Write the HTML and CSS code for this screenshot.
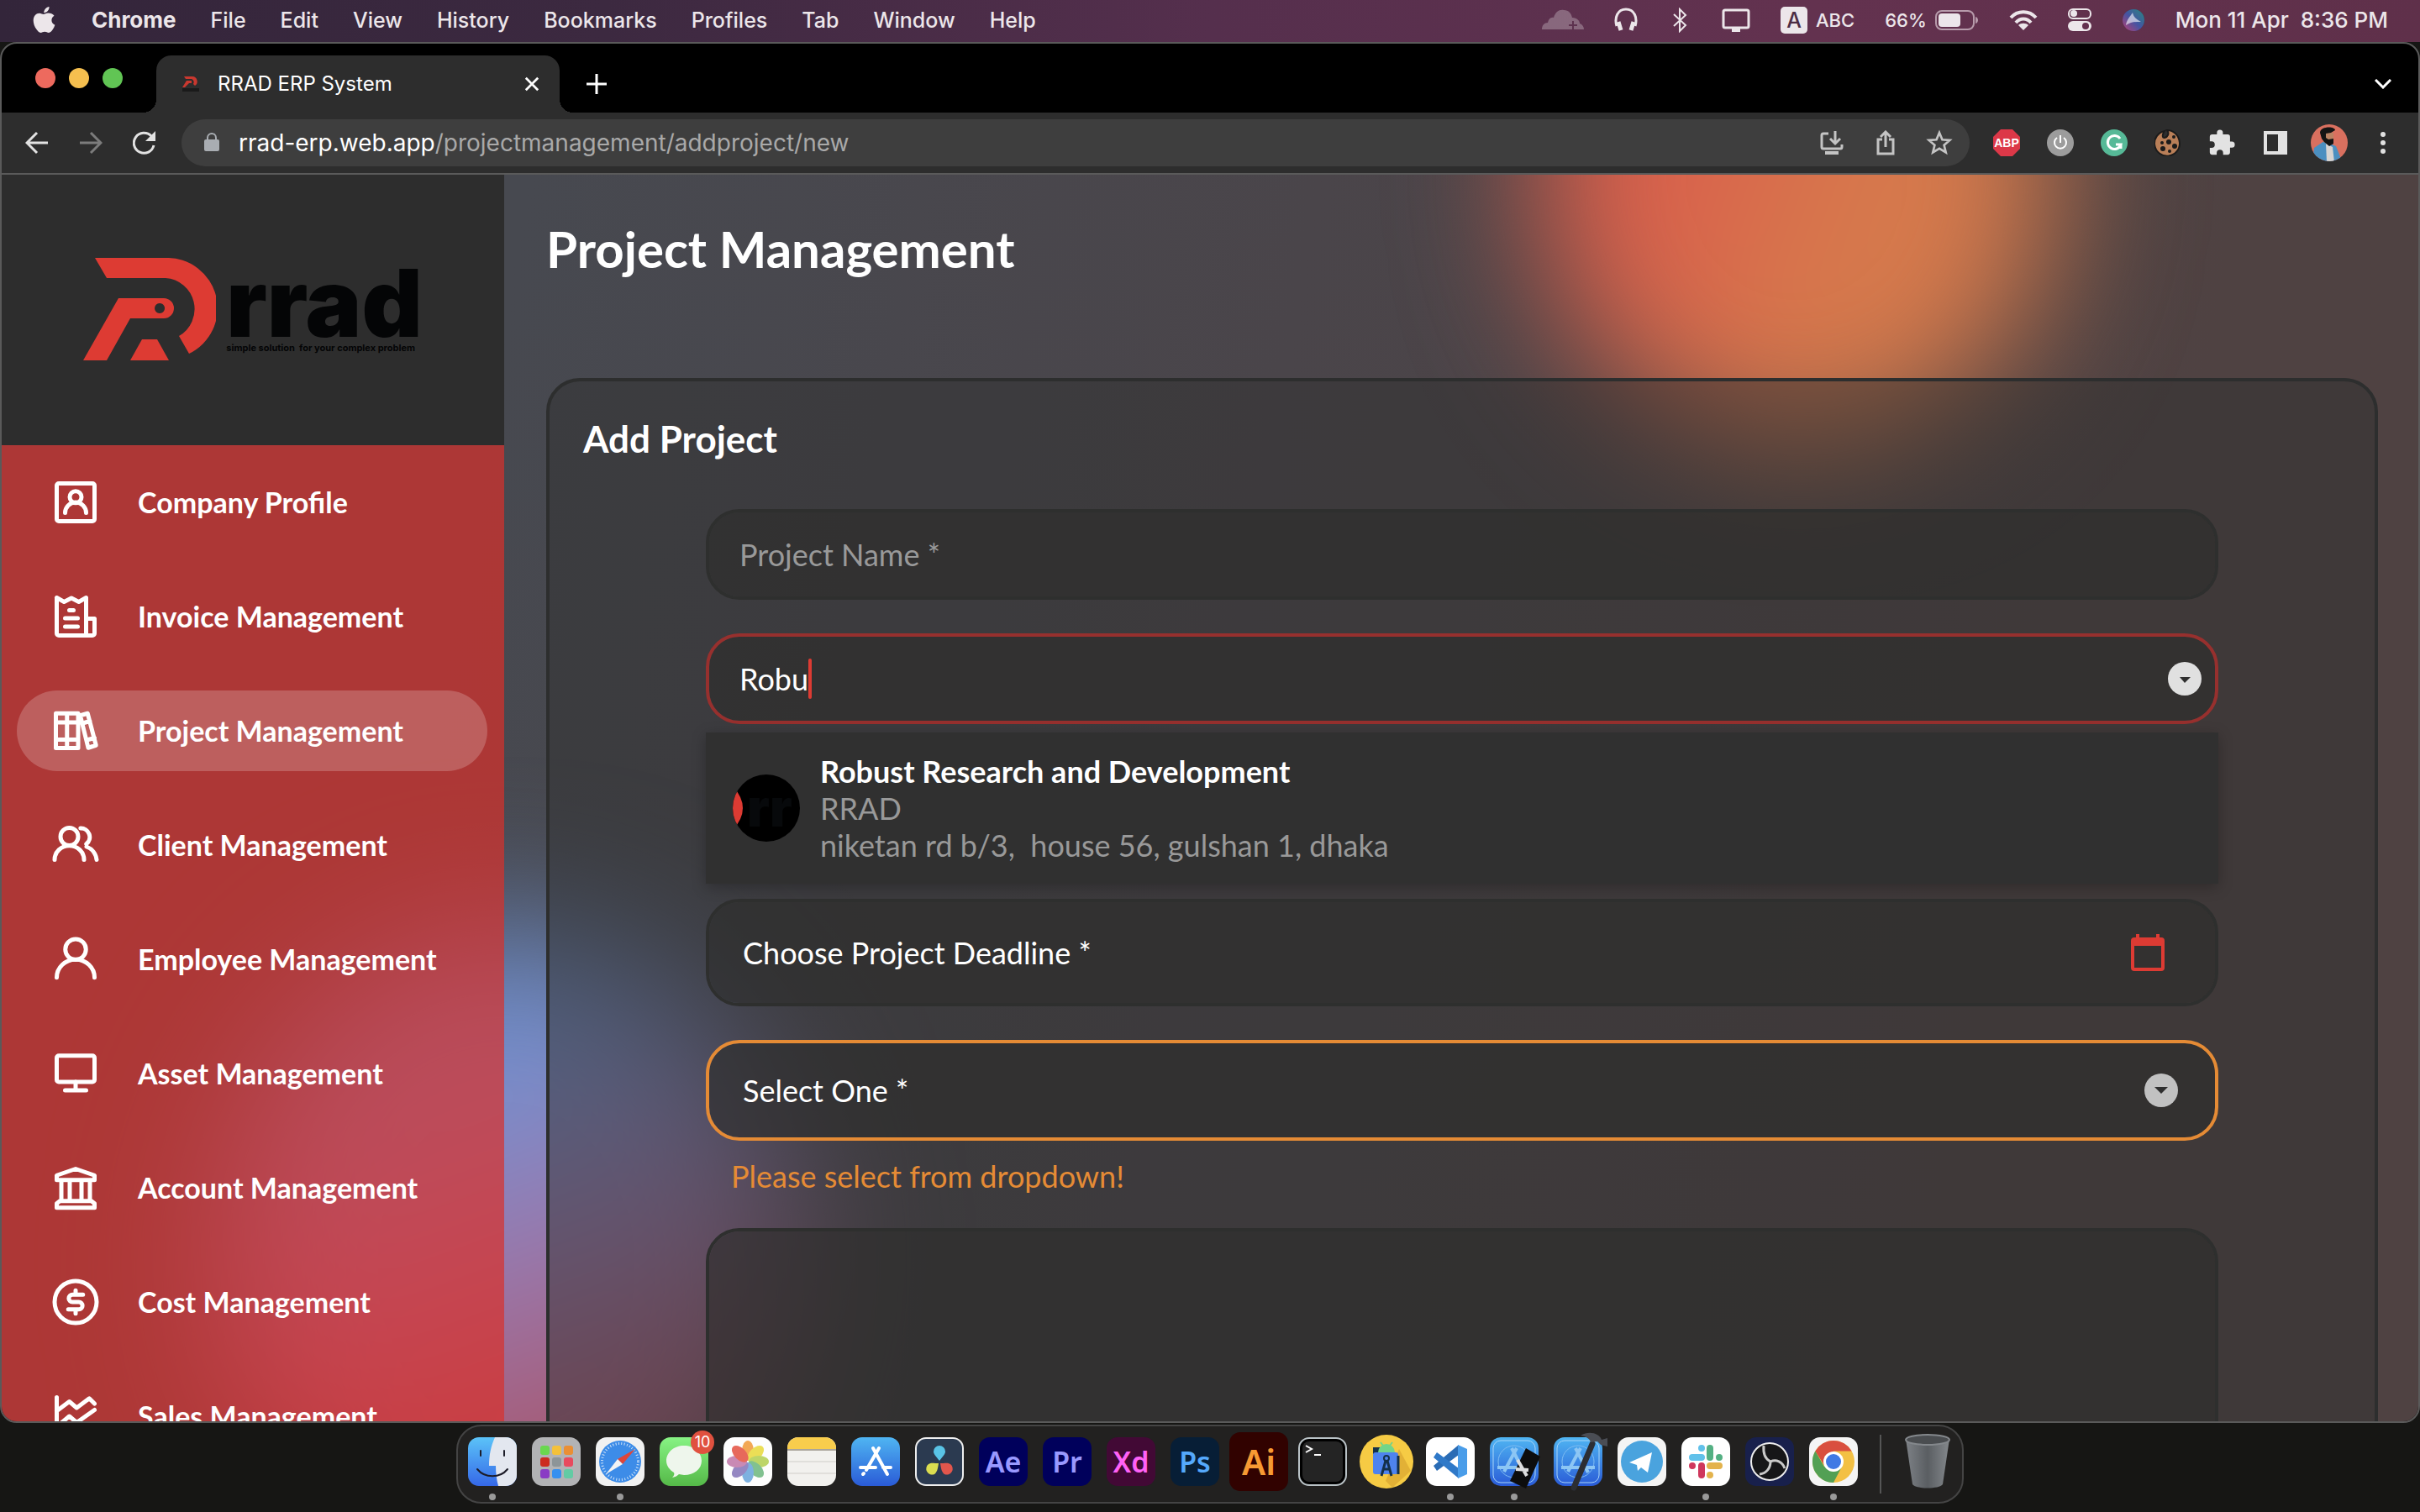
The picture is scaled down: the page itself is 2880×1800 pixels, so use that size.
FILE: index.html
```html
<!DOCTYPE html>
<html lang="en">
<head>
<meta charset="utf-8">
<title>RRAD ERP System</title>
<link rel="stylesheet" href="styles.css">
</head>
<body>
<header class="menubar">
  <nav class="menus" aria-label="Menu bar">
    <button class="menu" aria-label="Apple"><svg width="30" height="34" viewBox="0 0 30 34" fill="currentColor"><path d="M20.5 1c.2 2-.6 3.8-1.700 5.100-1.200 1.400-2.900 2.300-4.500 2.200-.2-1.900.7-3.800 1.700-4.900C17.200 2 19.100 1.100 20.500 1zM26.500 11.800c-1.900 1.200-3.100 3-3.100 5.300 0 2.700 1.600 4.800 4 5.700-.6 1.900-1.600 3.900-2.900 5.700-1.200 1.700-2.500 3.400-4.500 3.400s-2.500-1.200-4.800-1.200c-2.200 0-3 1.200-4.800 1.200-2 0-3.400-1.800-4.700-3.600C3.100 24.900 1.700 20.700 1.700 17.400c0-5.500 3.500-8.700 7.200-8.700 2 0 3.600 1.300 4.900 1.300 1.200 0 3.100-1.400 5.500-1.400 2.900 0 5.500 1.200 7.200 3.200z"/></svg></button>
    <button class="menu menu-app">Chrome</button>
    <button class="menu">File</button>
    <button class="menu">Edit</button>
    <button class="menu">View</button>
    <button class="menu">History</button>
    <button class="menu">Bookmarks</button>
    <button class="menu">Profiles</button>
    <button class="menu">Tab</button>
    <button class="menu">Window</button>
    <button class="menu">Help</button>
  </nav>
  <div class="status">
    <svg class="dim" width="50" height="26" viewBox="0 0 50 26" fill="currentColor"><path d="M0 24c0-5 3-8 7-8 1-5 4-7 7-6C16 3 21 0 26 1c6 0 9 4 10 9 6 0 9 4 9 7 3 1 5 4 5 7H0z"/><path d="M37 14v10M32 19h10" stroke="#5d3550" stroke-width="2"/></svg>
    <svg width="28" height="30" viewBox="0 0 28 30" fill="none" stroke="currentColor" stroke-width="3"><path d="M3 22c-3-10 1-20 11-20s14 10 11 20"/><path d="M5 17l3 10M23 17l-3 10" stroke-width="5"/></svg>
    <svg width="28" height="30" viewBox="0 0 28 30" fill="none" stroke="currentColor" stroke-width="2"><path d="M7 8l14 13-7 7V2l7 7L7 22"/></svg>
    <svg width="34" height="30" viewBox="0 0 34 30" fill="none" stroke="currentColor" stroke-width="3"><rect x="2" y="3" width="30" height="21" rx="2"/><path d="M12 27h10" stroke-width="4"/></svg>
    <span class="input-source"><span class="key">A</span>ABC</span>
    <span class="battery">66%<svg width="52" height="26" viewBox="0 0 52 26"><rect x="1" y="2" width="45" height="22" rx="7" fill="none" stroke="#b79bab" stroke-width="2"/><rect x="4" y="5" width="26" height="16" rx="4" fill="currentColor"/><path d="M48 9c4 1 4 7 0 8z" fill="#b79bab"/></svg></span>
    <svg width="34" height="26" viewBox="0 0 34 26" fill="none" stroke="currentColor" stroke-width="4"><path d="M2 10C10 1 24 1 32 10M8 16c5-6 13-6 18 0"/><path d="M17 25l-6-6c3-3 9-3 12 0z" fill="currentColor" stroke="none"/></svg>
    <svg width="28" height="28" viewBox="0 0 28 28"><rect x="1" y="1" width="26" height="11" rx="5" fill="none" stroke="currentColor" stroke-width="2"/><circle cx="7" cy="6" r="4" fill="currentColor"/><rect x="0" y="15" width="28" height="12" rx="6" fill="currentColor"/><circle cx="21" cy="21" r="4" fill="#63304e"/></svg>
    <svg width="28" height="28" viewBox="0 0 28 28"><defs><linearGradient id="siri" x1="0" y1="1" x2="1" y2="0"><stop offset="0" stop-color="#e0457c"/><stop offset=".5" stop-color="#4a5fb8"/><stop offset="1" stop-color="#28a08c"/></linearGradient></defs><circle cx="14" cy="14" r="13" fill="#2a2b4f"/><circle cx="14" cy="14" r="13" fill="url(#siri)" opacity=".8"/><path d="M5 20c1-7 5-10 8-15 1 5 4 8 10 11-7 0-12 0-18 4z" fill="#fff" opacity=".6"/></svg>
    <time class="clock">Mon 11 Apr&nbsp; 8:36 PM</time>
  </div>
</header>

<div class="window">
  <div class="tabstrip">
    <div class="lights"><button class="light red" aria-label="Close"></button><button class="light yellow" aria-label="Minimize"></button><button class="light green" aria-label="Zoom"></button></div>
    <div class="tab">
      <svg width="20" height="20" viewBox="0 0 20 20"><path d="M2 1h10a6 6 0 0 1 3 11l-2-2a4 4 0 0 0-2-6H4zM5 6h6v3H8l-5 5H0z" fill="#c9382f"/><path d="M0 15h20v4H0z" fill="#1a1a1a"/></svg>
      <span class="tab-title">RRAD ERP System</span>
      <button class="plain" aria-label="Close tab"><svg width="18" height="18" viewBox="0 0 20 20" stroke="#fff" stroke-width="3"><path d="M2 2l16 16M18 2L2 18"/></svg></button>
    </div>
    <button class="plain new-tab" aria-label="New tab"><svg width="24" height="24" viewBox="0 0 24 24" stroke="#fff" stroke-width="3"><path d="M12 0v24M0 12h24"/></svg></button>
    <button class="plain tab-search" aria-label="Search tabs"><svg width="20" height="12" viewBox="0 0 20 12" fill="none" stroke="#fff" stroke-width="3"><path d="M1 1l9 9 9-9"/></svg></button>
  </div>

  <div class="toolbar">
    <button class="tool" aria-label="Back"><svg width="28" height="28" viewBox="0 0 28 28" fill="none" stroke="#e2e2e2" stroke-width="3"><path d="M27 14H3M14 2L2 14l12 12"/></svg></button>
    <button class="tool" aria-label="Forward"><svg width="28" height="28" viewBox="0 0 28 28" fill="none" stroke="#7c7c7c" stroke-width="3"><path d="M1 14h24M14 2l12 12-12 12"/></svg></button>
    <button class="tool" aria-label="Reload"><svg width="28" height="28" viewBox="0 0 28 28"><path d="M25 17A12 12 0 1 1 22 6" fill="none" stroke="#e2e2e2" stroke-width="3"/><path d="M27 0v12H15z" fill="#e2e2e2"/></svg></button>
    <div class="omnibox">
      <svg class="lock" width="18" height="24" viewBox="0 0 18 24"><rect x="0" y="8" width="18" height="14" rx="2" fill="#a9adb2"/><path d="M4 9V6a5 5 0 0 1 10 0v3" fill="none" stroke="#a9adb2" stroke-width="2"/></svg>
      <div class="url" role="textbox" aria-label="Address"><span class="host">rrad-erp.web.app</span>/projectmanagement/addproject/new</div>
      <button class="tool" aria-label="Install app"><svg width="30" height="28" viewBox="0 0 30 28" fill="none" stroke="#c4c4c4" stroke-width="3"><path d="M11 3H5a2 2 0 0 0-2 2v14a2 2 0 0 0 2 2h20a2 2 0 0 0 2-2v-3M19 0v14M13 9l6 6 6-6"/><path d="M7 26h16" stroke-width="4"/></svg></button>
      <button class="tool" aria-label="Share"><svg width="24" height="30" viewBox="0 0 24 30" fill="none" stroke="#c4c4c4" stroke-width="3"><path d="M8 11H3v17h18V11h-5M12 20V3M6 8l6-6 6 6"/></svg></button>
      <button class="tool" aria-label="Bookmark"><svg width="32" height="32" viewBox="0 0 24 24" fill="none" stroke="#c4c4c4" stroke-width="2"><path d="M12 3l2.600 6.200 6.700.5-5.100 4.400 1.600 6.500L12 17.100l-5.800 3.500 1.600-6.500-5.100-4.400 6.700-.5z"/></svg></button>
    </div>
    <button class="tool abp" aria-label="Adblock Plus"><svg width="32" height="32" viewBox="0 0 32 32"><path d="M9 0h14l9 9v14l-9 9H9l-9-9V9z" fill="#dc3848"/><text x="16" y="21" text-anchor="middle" font-size="14" font-weight="700" fill="#fff">ABP</text></svg></button>
    <button class="tool" aria-label="Power"><svg width="32" height="32" viewBox="0 0 32 32" fill="none" stroke="#fff" stroke-width="2"><circle cx="16" cy="16" r="16" fill="#9c9c9c" stroke="none"/><path d="M12 10a7 7 0 1 0 8 0M16 7v9"/></svg></button>
    <button class="tool" aria-label="Grammarly"><svg width="32" height="32" viewBox="0 0 32 32" fill="none" stroke="#fff" stroke-width="3"><circle cx="16" cy="16" r="16" fill="#56b997" stroke="none"/><path d="M23 11a8 8 0 1 0 1 7h-6M24 17v6"/></svg></button>
    <button class="tool" aria-label="Cookies"><svg width="32" height="32" viewBox="0 0 32 32"><path d="M12 2a15 15 0 1 0 18 14C29 6 22 1 15 1c3 4 1 8-3 9-3 0-3-4 0-8z" fill="#b97f58" stroke="#1b1b1b" stroke-width="2"/><g fill="#1b1b1b"><circle cx="9" cy="16" r="2"/><circle cx="17" cy="15" r="3"/><circle cx="10" cy="23" r="3"/><circle cx="18" cy="26" r="2"/><circle cx="24" cy="20" r="3"/><circle cx="23" cy="9" r="2"/></g></svg></button>
    <button class="tool" aria-label="Extensions"><svg width="34" height="34" viewBox="0 0 24 24" fill="#e2e2e2"><path d="M20.500 11H19V7a2 2 0 0 0-2-2h-4V3.500a2.500 2.500 0 0 0-5 0V5H4a2 2 0 0 0-2 2v3.800h1.500a2.700 2.700 0 0 1 0 5.400H2V20a2 2 0 0 0 2 2h3.800v-1.500a2.700 2.700 0 0 1 5.400 0V22H17a2 2 0 0 0 2-2v-4h1.500a2.500 2.500 0 0 0 0-5z"/></svg></button>
    <button class="tool" aria-label="Side panel"><svg width="28" height="28" viewBox="0 0 28 28"><path d="M0 0h28v28H0zM4 4v20h13V4z" fill="#e2e2e2" fill-rule="evenodd"/></svg></button>
    <button class="tool" aria-label="Profile"><svg width="44" height="44" viewBox="0 0 44 44"><clipPath id="face"><circle cx="22" cy="22" r="22"/></clipPath><g clip-path="url(#face)"><path d="M0 0h44v44H0z" fill="#d9705f"/><path d="M4 28l12-8 14 6 8 20H2z" fill="#4b8fc0"/><path d="M18 23l8 4 2 18h-9z" fill="#d8d5d2"/><path d="M15 10h12v11l-4 4-8-4z" fill="#b98263"/><path d="M11 10c0-8 18-8 18-3l-5 3-6 1v5l3 2 6-1v6l-5 3-6-5-3-4z" fill="#141414"/></g></svg></button>
    <button class="tool" aria-label="Menu"><svg width="8" height="28" viewBox="0 0 8 28" fill="#e2e2e2"><circle cx="4" cy="4" r="3"/><circle cx="4" cy="14" r="3"/><circle cx="4" cy="24" r="3"/></svg></button>
  </div>

  <div class="page">
    <div class="blob blob-warm"></div>
    <div class="blob blob-cool"></div>
    <aside class="sidebar">
      <div class="brand">
        <svg width="158" height="122" viewBox="0 0 158 122" fill="#dd3b33"><path d="M14 0h84a60 60 0 0 1 28 114l-12-21a37 37 0 0 0-16-69H28z"/><path fill-rule="evenodd" d="M42 48h54a12 12 0 0 1 0 24H56L28 122H0zM91 54a6 6 0 1 0 .1 0z"/><path d="M70 97h18l14 25H56z"/></svg>
        <div class="brand-text"><span class="wordmark">rrad</span><span class="tagline">simple solution&nbsp; for your complex problem</span></div>
      </div>
      <nav class="side-nav" aria-label="Sections">
        <a class="side-link" href="#company"><svg class="side-icon" viewBox="0 0 24 24"><rect x="3" y="3" width="18" height="18" rx="1"/><circle cx="12" cy="9.500" r="2.800"/><path d="M7 17a5 5 0 0 1 10 0"/></svg>Company Profile</a>
        <a class="side-link" href="#invoice"><svg class="side-icon" viewBox="0 0 24 24"><path d="M3 3l3.500 2L10 3.200 13.500 5 17 3v18M17 13h4v7a1 1 0 0 1-1 1H4a1 1 0 0 1-1-1V3M9 9h2M7 12.800h6M7 16.800h6"/></svg>Invoice Management</a>
        <a class="side-link active" href="#project" aria-current="page"><svg class="side-icon" viewBox="0 0 24 24"><path d="M2.600 3.700h10.600v16.500H2.600zM7.900 3.700v16.500M2.600 8h10.600M2.600 16.200h10.600M14.200 4.700l3.500-1 4 15.200-3.700 1.200zM15.300 8.400l3.500-1M17.300 16.400l3.700-1"/></svg>Project Management</a>
        <a class="side-link" href="#client"><svg class="side-icon" viewBox="0 0 24 24"><circle cx="9" cy="8" r="4.200"/><path d="M2 19a7 6.700 0 0 1 14 0M14.300 4a4.200 4.200 0 0 1 2.800 7.500M17.200 12.800a7.500 7.500 0 0 1 4.800 6.200"/></svg>Client Management</a>
        <a class="side-link" href="#employee"><svg class="side-icon" viewBox="0 0 24 24"><circle cx="12" cy="7.300" r="4.900"/><path d="M3 20.700a9 8.600 0 0 1 18 0"/></svg>Employee Management</a>
        <a class="side-link" href="#asset"><svg class="side-icon" viewBox="0 0 24 24"><rect x="3" y="3.500" width="18" height="12.500" rx="1"/><path d="M12 16v4M7 20h10"/></svg>Asset Management</a>
        <a class="side-link" href="#account"><svg class="side-icon" viewBox="0 0 24 24"><path d="M3 8.300V6.100L12 3l9 3.100v2.200zM3 21.500v-2l1.500-1.200h15L21 19.500v2zM5.200 8.300v10M9.200 8.300v10M14.800 8.300v10M18.800 8.300v10"/></svg>Account Management</a>
        <a class="side-link" href="#cost"><svg class="side-icon" viewBox="0 0 24 24"><circle cx="12" cy="12" r="10"/><path d="M15.500 8.500h-5a1.700 1.700 0 0 0 0 3.500h3a1.700 1.700 0 0 1 0 3.500h-5M12 6.500v2M12 15.500v2"/></svg>Cost Management</a>
        <a class="side-link" href="#sales"><svg class="side-icon" viewBox="0 0 24 24"><path d="M3 3v18h18M3 9.500l6-4.500 3.500 3 6-4.500L21 6M3 17l6-5 3.500 3L21 9"/></svg>Sales Management</a>
      </nav>
    </aside>

    <main class="main">
      <h1 class="page-title">Project Management</h1>
      <section class="card">
        <h2 class="card-title">Add Project</h2>
        <form class="form">
          <input class="field" type="text" placeholder="Project Name *" aria-label="Project Name">
          <div class="combo">
            <div class="field combo-box">
              <input class="combo-input" type="text" value="Robu" aria-label="Client"><span class="caret"></span>
              <button class="plain combo-toggle" type="button" aria-label="Show clients"><svg width="40" height="40" viewBox="0 0 40 40"><circle cx="20" cy="20" r="20" fill="#e0e0e0"/><path d="M14 18h13l-7 7z" fill="#2f2f2f"/></svg></button>
            </div>
            <div class="options" role="listbox">
              <div class="option" role="option" aria-selected="false">
                <svg width="80" height="80" viewBox="0 0 80 80"><clipPath id="logo"><circle cx="40" cy="40" r="40"/></clipPath><g clip-path="url(#logo)"><path d="M0 0h80v80H0z"/><path d="M0 14q24 26 0 52z" fill="#dd3b33"/><text class="mini-word" x="17" y="62">rr</text></g></svg>
                <div class="option-text"><strong class="option-name">Robust Research and Development</strong><span>RRAD</span><span>niketan rd b/3,&nbsp; house 56, gulshan 1, dhaka</span></div>
              </div>
            </div>
          </div>
          <button class="field date-field" type="button">Choose Project Deadline *<svg width="40" height="44" viewBox="0 0 40 44"><path fill-rule="evenodd" fill="#dd3b33" d="M6 0h4v4h20V0h4v4h2a4 4 0 0 1 4 4v32a4 4 0 0 1-4 4H4a4 4 0 0 1-4-4V8a4 4 0 0 1 4-4h2zM4 14v26h32V14z"/></svg></button>
          <div class="select-group">
            <select class="field select-field" aria-label="Project type" aria-describedby="select-error"><option>Select One *</option></select>
            <svg class="select-arrow" width="40" height="40" viewBox="0 0 40 40"><circle cx="20" cy="20" r="20" fill="#c1c1c1"/><path d="M12 16h16l-8 8z" fill="#2f2f2f"/></svg>
            <p class="error" id="select-error">Please select from dropdown!</p>
          </div>
          <textarea class="field notes" aria-label="Description"></textarea>
        </form>
      </section>
    </main>
  </div>
</div>

<footer class="dock-area">
  <div class="dock">
    <button class="app open" aria-label="Finder"><svg viewBox="0 0 58 58"><defs><linearGradient id="fi" x2="0" y2="1"><stop stop-color="#5bc3f8"/><stop offset="1" stop-color="#3568e8"/></linearGradient><clipPath id="sq"><rect width="58" height="58" rx="13"/></clipPath></defs><g clip-path="url(#sq)"><path d="M0 0h58v58H0z" fill="url(#fi)"/><path d="M32 0c-5 11-7 22-7 34h8c0 9 1 17 3 24h22V0z" fill="#e3e7ef"/></g><path d="M15 16v6M43 16v6M11 38c9 11 27 11 36 0" fill="none" stroke="#1c1c28" stroke-width="2" stroke-linecap="round"/></svg></button>
    <button class="app" aria-label="Launchpad"><svg viewBox="0 0 58 58"><rect width="58" height="58" rx="13" fill="#b2b3b5"/><rect x="10" y="10" width="11" height="11" rx="3" fill="#6ad84f"/><rect x="24" y="10" width="11" height="11" rx="3" fill="#f4c13a"/><rect x="38" y="10" width="11" height="11" rx="3" fill="#ea8f34"/><rect x="10" y="24" width="11" height="11" rx="3" fill="#cc2c20"/><rect x="24" y="24" width="11" height="11" rx="3" fill="#8d9598"/><rect x="38" y="24" width="11" height="11" rx="3" fill="#e84a5e"/><rect x="10" y="38" width="11" height="11" rx="3" fill="#8a3cc4"/><rect x="24" y="38" width="11" height="11" rx="3" fill="#3590ef"/><rect x="38" y="38" width="11" height="11" rx="3" fill="#62cba4"/></svg></button>
    <button class="app open" aria-label="Safari"><svg viewBox="0 0 58 58"><rect width="58" height="58" rx="13" fill="#f1f1f1"/><circle cx="29" cy="29" r="25" fill="#3d8ce8"/><circle cx="29" cy="29" r="21.500" fill="none" stroke="#cfe3f8" stroke-width="3" stroke-dasharray="1 2.400"/><path d="M47 14L32 32l-6-6z" fill="#e0453a"/><path d="M12 44l14-18 6 6z" fill="#f4f4f4"/></svg></button>
    <button class="app" aria-label="Messages"><svg viewBox="0 0 58 58"><defs><linearGradient id="me" x2="0" y2="1"><stop stop-color="#87f384"/><stop offset="1" stop-color="#55b948"/></linearGradient></defs><rect width="58" height="58" rx="13" fill="url(#me)"/><path d="M29 10c12 0 21 8 21 18s-9 17-21 17l-6-1c-2 2-4 3-8 4 2-2 3-4 2-6-5-3-9-8-9-14 0-10 9-18 21-18z" fill="#eef6ec"/></svg><span class="badge">10</span></button>
    <button class="app" aria-label="Photos"><svg viewBox="0 0 58 58"><rect width="58" height="58" rx="13" fill="#fdfdfd"/><g opacity=".85"><ellipse cx="29" cy="16" rx="7" ry="12" fill="#f19a38"/><ellipse cx="29" cy="16" rx="7" ry="12" fill="#e8d93a" transform="rotate(45 29 29)"/><ellipse cx="29" cy="16" rx="7" ry="12" fill="#b3cf4f" transform="rotate(90 29 29)"/><ellipse cx="29" cy="16" rx="7" ry="12" fill="#6cb77d" transform="rotate(135 29 29)"/><ellipse cx="29" cy="16" rx="7" ry="12" fill="#67a4dc" transform="rotate(180 29 29)"/><ellipse cx="29" cy="16" rx="7" ry="12" fill="#8474b8" transform="rotate(225 29 29)"/><ellipse cx="29" cy="16" rx="7" ry="12" fill="#c176a8" transform="rotate(270 29 29)"/><ellipse cx="29" cy="16" rx="7" ry="12" fill="#e4503f" transform="rotate(315 29 29)"/></g></svg></button>
    <button class="app" aria-label="Notes"><svg viewBox="0 0 58 58"><g clip-path="url(#sq)"><path d="M0 0h58v58H0z" fill="#f2f1ee"/><path d="M0 0h58v14H0z" fill="#f8cd4c"/></g><path d="M0 15h58" stroke="#aaa69c" stroke-width="2"/><path d="M0 29h58M0 43h58" stroke="#cfcdc8"/></svg></button>
    <button class="app" aria-label="App Store"><svg viewBox="0 0 58 58"><defs><linearGradient id="as" x2="0" y2="1"><stop stop-color="#4fb5f2"/><stop offset="1" stop-color="#2a5bd7"/></linearGradient></defs><rect width="58" height="58" rx="13" fill="url(#as)"/><path d="M26 13l17 31M33 13L18 39M11 36h18M38 36h9M15 43l-1 1" stroke="#fff" stroke-width="4" stroke-linecap="round"/></svg></button>
    <button class="app" aria-label="DaVinci Resolve"><svg viewBox="0 0 58 58"><rect x="1" y="1" width="56" height="56" rx="12" fill="#2b3a50" stroke="#eee" stroke-width="2"/><path d="M29 28c-4-5-7-8-7-11a7 7 0 0 1 14 0c0 3-3 6-7 11z" fill="#59c3e6"/><path d="M28 31c-1 7-2 11-5 13a7 7 0 0 1-7-12c3-2 6-1 12-1z" fill="#dbdd50"/><path d="M30 31c1 7 2 11 5 13a7 7 0 0 0 7-12c-3-2-6-1-12-1z" fill="#e2564c"/></svg></button>
    <button class="app" aria-label="After Effects"><span class="tile ae">Ae</span></button>
    <button class="app" aria-label="Premiere Pro"><span class="tile ae">Pr</span></button>
    <button class="app" aria-label="XD"><span class="tile xd">Xd</span></button>
    <button class="app" aria-label="Photoshop"><span class="tile ps">Ps</span></button>
    <button class="app" aria-label="Illustrator"><span class="tile ai">Ai</span></button>
    <button class="app" aria-label="Terminal"><svg viewBox="0 0 58 58"><rect x="1" y="1" width="56" height="56" rx="12" fill="#000" stroke="#b9c2c6" stroke-width="2"/><rect x="5" y="5" width="48" height="48" rx="8" fill="#242424"/><path d="M9 10l7 4-7 4M19 21h8" fill="none" stroke="#fff" stroke-width="2"/></svg></button>
    <button class="app" aria-label="Android Studio"><svg viewBox="0 0 58 58"><circle cx="29" cy="29" r="32" fill="#f6cb44"/><path d="M44 14l14 26-22 20-8-8z" fill="#e2b136"/><path d="M13 12h14v8H13z" fill="#14304a"/><rect x="13" y="18" width="30" height="26" rx="3" fill="#4e83ee"/><path d="M19 18a10 10 0 0 1 20 0z" fill="#73d589"/><path d="M22 6l3 4M36 6l-3 4" stroke="#73d589" stroke-width="2"/><circle cx="29" cy="25" r="3" fill="none" stroke="#14304a" stroke-width="2"/><path d="M28 28l-5 18M30 28l5 18M25 38h8M43 22v22" stroke="#14304a" stroke-width="3"/></svg></button>
    <button class="app open" aria-label="Visual Studio Code"><svg viewBox="0 0 58 58"><rect width="58" height="58" rx="13" fill="#fff"/><path d="M39 9l-30 25 4 6 26-19z" fill="#2a6cb5"/><path d="M39 49L9 24l4-6 26 19z" fill="#2f79c8"/><path d="M38 9l11 5v30l-11 5z" fill="#4a9de9"/></svg></button>
    <button class="app open" aria-label="Simulator"><svg viewBox="0 0 58 58"><rect width="58" height="58" rx="13" fill="url(#as)"/><rect x="4" y="4" width="50" height="50" rx="9" fill="none" stroke="#a9d5f7"/><circle cx="29" cy="29" r="19" fill="none" stroke="#7fbdf2"/><path d="M26 13l15 29M32 13L17 41M9 36h40" stroke="#8cc6f4" stroke-width="4"/><path d="M43 13l17 10-17 38-19-9z" fill="#0d0d0d"/><path d="M33 27l11 19M31 38l15 1" stroke="#ddd" stroke-width="4"/></svg></button>
    <button class="app" aria-label="Xcode"><svg viewBox="0 0 58 58"><rect width="58" height="58" rx="13" fill="url(#as)"/><rect x="4" y="4" width="50" height="50" rx="9" fill="none" stroke="#a9d5f7"/><circle cx="29" cy="29" r="19" fill="none" stroke="#7fbdf2"/><path d="M26 13l15 29M32 13L17 41M9 36h40" stroke="#8cc6f4" stroke-width="4"/><path d="M46 8L24 60" stroke="#2c2e33" stroke-width="7" stroke-linecap="round"/><path d="M32-2c10-6 22-3 25 5l7-2v10l-8-2-4-4-8 1c-1-4-5-7-12-8z" fill="#4a4d54"/></svg></button>
    <button class="app" aria-label="Telegram"><svg viewBox="0 0 58 58"><rect width="58" height="58" rx="13" fill="#f4f4f4"/><circle cx="29" cy="29" r="25" fill="#4aa3de"/><path d="M14 30l27-12-5 24-8-6-4 4-1-7z" fill="#fff"/></svg></button>
    <button class="app open" aria-label="Slack"><svg viewBox="0 0 58 58" fill="none" stroke-width="8" stroke-linecap="round"><rect width="58" height="58" rx="13" fill="#fff"/><path d="M24 13h0M13 24h11" stroke="#61c1ea"/><path d="M34 13v11M45 24h0" stroke="#54b083"/><path d="M34 34h11M34 45h0" stroke="#e3b34c"/><path d="M24 34v11M13 34h0" stroke="#cf375c"/></svg></button>
    <button class="app" aria-label="OBS"><svg viewBox="0 0 58 58"><rect width="58" height="58" rx="13" fill="#18204c"/><circle cx="29" cy="29" r="22" fill="#161618" stroke="#eee" stroke-width="2"/><path d="M22 10c-1 10 2 16 8 19 7-3 14 0 17 8M30 29c0 8-5 14-13 15" fill="none" stroke="#c9c9c9" stroke-width="3"/></svg></button>
    <button class="app open" aria-label="Chrome"><svg viewBox="0 0 58 58"><rect width="58" height="58" rx="13" fill="#f5f5f5"/><circle cx="29" cy="29" r="25" fill="#f3c044"/><path d="M7.300 16.500A25 25 0 0 1 50.700 16.500H29L19 35z" fill="#d94f3f"/><path d="M7.300 16.500A25 25 0 0 0 29 54l10-19H18z" fill="#52a054"/><circle cx="29" cy="29" r="12" fill="#fff"/><circle cx="29" cy="29" r="9" fill="#4079e4"/></svg></button>
    <span class="divider"></span>
    <button class="app" aria-label="Trash"><svg viewBox="0 0 58 58"><defs><linearGradient id="tr"><stop stop-color="#7d8186"/><stop offset=".5" stop-color="#5a5e62"/><stop offset="1" stop-color="#84888c"/></linearGradient></defs><path d="M3 2l8 54c4 6 32 6 36 0l8-54z" fill="url(#tr)"/><ellipse cx="29" cy="3" rx="26" ry="6" fill="#4a4d50" stroke="#84888c" stroke-width="2"/></svg></button>
  </div>
</footer>
</body>
</html>
```
FILE: styles.css
```css
* { box-sizing: border-box; }

body {
  margin: 0;
  height: 100vh;
  display: flex;
  flex-direction: column;
  overflow: hidden;
  background: #161614;
  color: #fff;
  font-family: Lato, sans-serif;
  font-size: 36px;
  line-height: 44px;
}

button, input, select, textarea { font: inherit; color: inherit; margin: 0; }
button { padding: 0; border: 0; background: none; }
svg { display: block; flex: none; }

/* Menu bar */
.menubar {
  flex: none;
  height: 50px;
  padding: 0 38px 2px;
  display: flex;
  justify-content: space-between;
  align-items: center;
  background: linear-gradient(90deg, #33253a, #3c2940 25%, #552f4d 50%, #63324f 75%, #5f304a);
  color: #ece6ea;
  font: 500 25px/32px Inter, sans-serif;
}
.menus { display: flex; align-items: center; gap: 41px; }
.menu-app { font-size: 26px; font-weight: 700; }
.status { display: flex; align-items: center; gap: 36px; white-space: nowrap; }
.clock { font-size: 26px; }
.dim { opacity: .3; }
.input-source, .battery { display: flex; align-items: center; gap: 10px; font-size: 22px; }
.key {
  width: 32px;
  border-radius: 5px;
  background: #ece6ea;
  color: #4c2c44;
  font-size: 25px;
  text-align: center;
}

/* Browser window */
.window {
  flex: 1;
  min-height: 0;
  display: flex;
  flex-direction: column;
  overflow: hidden;
  border: 2px solid #5a5a5a;
  border-radius: 20px;
  background: #000;
}
.plain { display: grid; place-items: center; }
.tabstrip { flex: none; height: 82px; display: flex; align-items: center; }
.lights { display: flex; gap: 16px; padding-left: 40px; }
.light { width: 24px; height: 24px; border-radius: 50%; }
.red { background: #ed6a5e; }
.yellow { background: #f5bf4f; }
.green { background: #61c554; }
.tab {
  position: relative;
  align-self: flex-end;
  width: 480px;
  height: 68px;
  margin-left: 40px;
  padding: 0 24px 0 31px;
  display: flex;
  align-items: center;
  gap: 22px;
  border-radius: 18px 18px 0 0;
  background: #2d2d2d;
  font: 500 24px/32px Inter, sans-serif;
}
.tab::before, .tab::after {
  content: "";
  position: absolute;
  bottom: 0;
  width: 16px;
  height: 16px;
}
.tab::before { left: -16px; background: radial-gradient(circle at 0 0, transparent 16px, #2d2d2d 16px); }
.tab::after { right: -16px; background: radial-gradient(circle at 100% 0, transparent 16px, #2d2d2d 16px); }
.tab-title { flex: 1; font-weight: 400; }
.new-tab { align-self: flex-end; width: 88px; height: 68px; }
.tab-search { align-self: flex-end; width: 64px; height: 68px; margin: 0 10px 0 auto; }

.toolbar {
  flex: none;
  height: 74px;
  padding: 0 10px;
  display: flex;
  align-items: center;
  background: #2d2d2d;
  border-bottom: 2px solid #5a5a5a;
}
.tool { width: 64px; height: 56px; flex: none; display: grid; place-items: center; }
.abp { font-family: "Liberation Sans", sans-serif; }
.omnibox {
  flex: 1;
  min-width: 0;
  height: 56px;
  margin: 0 12px;
  padding: 0 4px 0 27px;
  display: flex;
  align-items: center;
  border-radius: 28px;
  background: #3e3e3e;
}
.url {
  flex: 1;
  margin-left: 23px;
  color: #a9a9a9;
  font: 400 28px/36px Inter, sans-serif;
  white-space: nowrap;
}
.host { color: #fff; }

/* Web page */
.page {
  position: relative;
  flex: 1;
  min-height: 0;
  display: flex;
  overflow: hidden;
  background: linear-gradient(100deg, #474950 20%, #4a454a 50%, #4f4242 85%);
}
.blob { position: absolute; border-radius: 50%; }
.blob-warm {
  top: -330px;
  right: 430px;
  width: 620px;
  height: 660px;
  background: linear-gradient(110deg, #da5f4c 30%, #d67a4c 60%);
  filter: blur(80px);
}
.blob-cool {
  top: 900px;
  left: 250px;
  width: 700px;
  height: 800px;
  background: linear-gradient(160deg, #7092d2 25%, #9a7ab0 48%, #a8566c 75%);
  filter: blur(90px);
}

.sidebar {
  position: relative;
  flex: none;
  width: 598px;
  background: rgba(217, 49, 43, .7);
}
.brand {
  height: 322px;
  padding-bottom: 2px;
  display: flex;
  justify-content: center;
  align-items: center;
  gap: 12px;
  background: #2d2d2d;
  color: #040506;
  font-family: Inter, sans-serif;
}
.brand-text { display: flex; flex-direction: column; }
.wordmark { font-size: 112px; font-weight: 900; line-height: 92px; }
.tagline { font-size: 11px; font-weight: 700; line-height: 16px; white-space: nowrap; }
.side-nav { display: flex; flex-direction: column; gap: 40px; padding: 20px 20px 0 18px; }
.side-link {
  flex: none;
  height: 96px;
  padding-left: 40px;
  display: flex;
  align-items: center;
  gap: 44px;
  border-radius: 48px;
  color: #fff;
  font-size: 34px;
  font-weight: 700;
  text-decoration: none;
}
.active { background: rgba(255, 255, 255, .2); }
.side-icon {
  width: 60px;
  height: 60px;
  fill: none;
  stroke: #fff;
  stroke-width: 2;
  stroke-linecap: round;
  stroke-linejoin: round;
}

.main { position: relative; flex: 1; min-width: 0; padding: 52px 48px 0 50px; }
.page-title { margin: 0 0 118px; font-size: 60px; line-height: 72px; }
.card {
  min-height: 100%;
  padding: 42px 40px;
  border: 4px solid #2d2e2e;
  border-radius: 40px;
  background: rgba(47, 47, 47, .5);
}
.card-title { margin: 0; font-size: 44px; line-height: 52px; }
.form { display: flex; flex-direction: column; margin: 58px 146px 0; }
.field {
  width: 100%;
  height: 108px;
  padding: 0 36px;
  border: 4px solid #2e2f2e;
  border-radius: 40px;
  background: rgba(44, 44, 43, .65);
  background-clip: padding-box;
  outline: 0;
}
.field::placeholder { color: #999; opacity: 1; }
.combo { margin-top: 40px; }
.combo-box { display: flex; align-items: center; padding-right: 16px; border-color: #97302e; }
.combo-input { width: 82px; padding: 0; border: 0; outline: 0; background: none; }
.caret { width: 4px; height: 48px; border-radius: 2px; background: #dd3b33; }
.combo-toggle { margin-left: auto; }
.options { margin-top: 10px; background: #303030; box-shadow: 0 4px 16px rgba(0, 0, 0, .25); }
.option { display: flex; align-items: center; gap: 24px; padding: 24px 32px; }
.option-text { display: flex; flex-direction: column; color: #999; }
.option-name { color: #fff; }
.mini-word { font: 900 62px Inter, sans-serif; fill: #07090b; }
.date-field {
  height: 128px;
  margin-top: 18px;
  padding: 0 60px 0 40px;
  display: flex;
  align-items: center;
  justify-content: space-between;
}
.select-group { position: relative; margin-top: 40px; }
.select-field { height: 120px; padding: 0 40px; border-color: #e58b35; appearance: none; }
.select-arrow { position: absolute; top: 40px; right: 48px; pointer-events: none; }
.error { margin: 20px 0 0 30px; color: #e58b35; }
.notes { display: block; height: 400px; margin-top: 40px; padding: 32px 36px; resize: none; }

/* Dock */
.dock-area { flex: none; height: 106px; padding-top: 2px; display: flex; justify-content: center; align-items: flex-start; }
.dock {
  display: flex;
  gap: 18px;
  height: 94px;
  padding: 13px 12px 0;
  border: 2px solid #444;
  border-radius: 30px;
  background: #222120;
}
.app { position: relative; width: 58px; height: 58px; }
.app svg { width: 58px; height: 58px; overflow: visible; }
.open::after {
  content: "";
  position: absolute;
  left: 25px;
  bottom: -17px;
  width: 8px;
  height: 8px;
  border-radius: 50%;
  background: #9a9a9a;
}
.badge {
  position: absolute;
  top: -8px;
  right: -7px;
  width: 28px;
  height: 28px;
  border-radius: 50%;
  background: #e0513f;
  font: 400 18px/28px Inter, sans-serif;
}
.tile {
  display: block;
  border-radius: 13px;
  font: 600 34px/58px "Noto Sans", sans-serif;
}
.ae { background: #00005b; color: #9999ff; }
.xd { background: #420935; color: #ff61f6; }
.ps { background: #071e36; color: #55a9fc; }
.ai { margin: -6px; background: #310200; color: #f79a33; font-size: 42px; line-height: 70px; }
.divider { width: 2px; height: 70px; margin: -3px 8px 0; background: #555; }
```
